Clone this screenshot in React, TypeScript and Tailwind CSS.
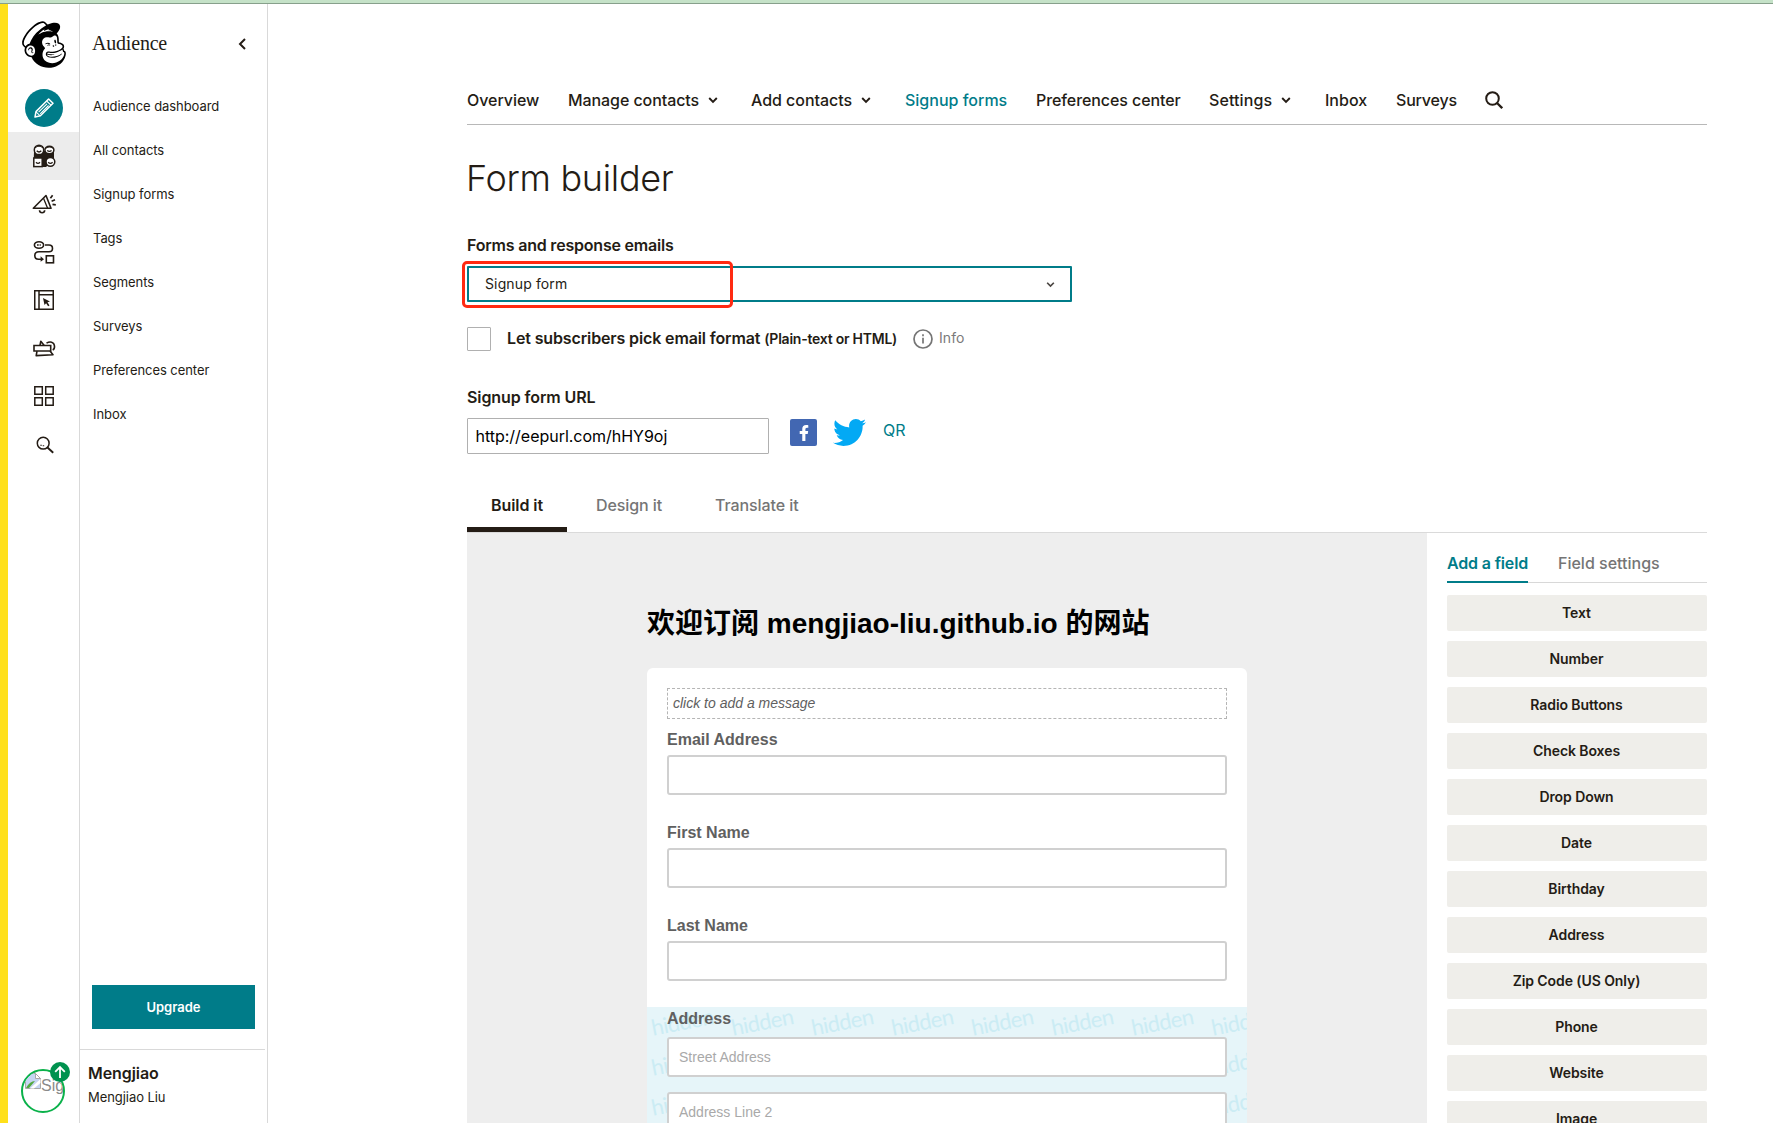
import type { ReactNode } from "react";
import { FaFacebookF, FaMailchimp, FaTwitter } from "react-icons/fa";

const sideLinks = [
  "Audience dashboard",
  "All contacts",
  "Signup forms",
  "Tags",
  "Segments",
  "Surveys",
  "Preferences center",
  "Inbox",
];

const fieldTypes = [
  "Text",
  "Number",
  "Radio Buttons",
  "Check Boxes",
  "Drop Down",
  "Date",
  "Birthday",
  "Address",
  "Zip Code (US Only)",
  "Phone",
  "Website",
  "Image",
];

function Chevron({ className = "" }: { className?: string }) {
  return (
    <svg width="10" height="8" viewBox="0 0 10 8" fill="none" stroke="currentColor" strokeWidth="1.9" className={className}>
      <path d="M1.2 2 5 5.8 8.8 2" />
    </svg>
  );
}

function PencilIcon() {
  return (
    <svg width="20" height="20" viewBox="0 0 20 20" fill="none" stroke="#fff" strokeWidth="1.5" strokeLinejoin="round">
      <path d="M1 19 2 13.6 14.6 1 19 5.2 6.4 17.8Z" />
      <path d="M12.6 3 17 7.2M4.6 14.2 13 5.9M6.2 15.8 14.6 7.5M2 13.8 6.2 17.8" strokeWidth="1.1" />
    </svg>
  );
}

function AudienceIcon() {
  return (
    <svg width="24" height="24" viewBox="0 0 24 24" fill="none" stroke="#241c15" strokeWidth="1.5">
      <path d="M2 7h20v9l-8 7H1.500z" fill="#241c15" stroke="none" />
      <circle cx="7" cy="5.900" r="4.700" fill="#fff" />
      <ellipse cx="17.400" cy="6" rx="4.500" ry="3.800" fill="#fff" />
      <rect x="1.800" y="14" width="8.400" height="8.600" fill="#fff" />
      <circle cx="18.400" cy="17.800" r="4.400" fill="#fff" />
      <path d="M4.700 6.800q2.300 2.400 4.600 0M15.200 6.400q2.200 1.800 4.400 0M4 18.300q2 2.200 4 0M16.200 18.200q2.200 2.400 4.400 0" strokeWidth="1.300" />
      <path d="M3 3.800q4-3 8 0M13.600 4.200q4-2.500 7.600 0" strokeWidth="1.100" />
    </svg>
  );
}

function CampaignIcon() {
  return (
    <svg width="24" height="22" viewBox="0 0 24 22" fill="none" stroke="#241c15" strokeWidth="1.6" strokeLinejoin="round">
      <path d="M1.300 15.300 14 2.500 19 15.300Z" />
      <path d="M11.500 5.200 15.600 15.200" strokeWidth="1.300" />
      <path d="M7.500 17.300q.2 2.500 2.600 2.500t2.600-2.500" />
      <path d="M18.400 5.200 20.600 2.300M19.600 8.200 23 6.800M20.500 11.300l3.300.5" strokeWidth="1.700" />
    </svg>
  );
}

function AutomationIcon() {
  return (
    <svg width="22" height="24" viewBox="0 0 22 24" fill="none" stroke="#241c15" strokeWidth="1.6">
      <ellipse cx="6" cy="5" rx="4.600" ry="3.300" />
      <path d="M4 5h1.700M6.600 5h1.200" strokeWidth="1.500" />
      <path d="M12 5h4c2.200 0 3.500 1.300 3.500 3.400s-1.400 3.300-3.500 3.300H6c-2.600 0-4.200 1.400-4.200 3.800 0 2.300 1.500 3.700 3.700 3.700H9" />
      <path d="M7.600 16.200 11 19.200 7.600 21.800Z" fill="#241c15" stroke="none" />
      <rect x="13.300" y="15.800" width="7.200" height="7" />
    </svg>
  );
}

function WebsiteIcon() {
  return (
    <svg width="20" height="20" viewBox="0 0 20 20" fill="none" stroke="#241c15" strokeWidth="1.500">
      <rect x=".75" y=".75" width="18.500" height="18.500" />
      <path d="M5 .7v18.600M5 4.700h14.500" />
      <path d="m9 8 7 3.500-2.500.8 2 3.100-1.400.9-2-3.100-1.600 1.700z" fill="#241c15" stroke="none" />
    </svg>
  );
}

function ContentIcon() {
  return (
    <svg width="24" height="20" viewBox="0 0 24 20" fill="none" stroke="#241c15" strokeWidth="1.600">
      <path d="M2 7.500h16.700v5.500H2z" />
      <path d="M8 7.400 8.800 3.200 12.200 7.400M5 13.200 4.200 17.600 21 16.800 18 13" strokeLinejoin="round" />
      <path d="M14.500 5.200C18 2.900 22 3.800 22.500 8c.2 2-.5 3.300-1.800 3.900" />
    </svg>
  );
}

function GridIcon() {
  return (
    <svg width="20" height="20" viewBox="0 0 20 20" fill="none" stroke="#241c15" strokeWidth="1.500">
      <path d="M.8.8h7.500v7.500H.8zM11.700.8h7.500v7.500h-7.500zM.8 11.700h7.500v7.500H.8zM11.700 11.700h7.500v7.500h-7.500z" />
    </svg>
  );
}

function RailSearchIcon() {
  return (
    <svg width="18" height="18" viewBox="0 0 18 18" fill="none" stroke="#241c15" strokeWidth="1.500" className="mt-0.5 ml-0.5">
      <circle cx="7.200" cy="7.200" r="5.900" />
      <path d="m11.500 11.500 5.700 5.300" strokeWidth="1.900" />
      <path d="M4.300 9.300h1.500M6.700 9.800h1.500" strokeWidth="1.100" />
    </svg>
  );
}

function RailItem({ children, active = false }: { children: ReactNode; active?: boolean }) {
  return (
    <div className={`flex h-12 w-full items-center justify-center ${active ? "bg-[#ececec]" : ""}`}>{children}</div>
  );
}

function Rail() {
  return (
    <nav className="flex w-[72px] shrink-0 flex-col border-r border-[#d9d9d9]">
      <FaMailchimp className="mt-[14px] ml-[10px] h-[53px] w-[52px] text-black" />
      <div className="mt-[18px] mb-[5px] ml-[17px] flex size-[38px] items-center justify-center rounded-full bg-[#007c89]">
        <PencilIcon />
      </div>
      <RailItem active>
        <AudienceIcon />
      </RailItem>
      <RailItem>
        <CampaignIcon />
      </RailItem>
      <RailItem>
        <AutomationIcon />
      </RailItem>
      <RailItem>
        <WebsiteIcon />
      </RailItem>
      <RailItem>
        <ContentIcon />
      </RailItem>
      <RailItem>
        <GridIcon />
      </RailItem>
      <RailItem>
        <RailSearchIcon />
      </RailItem>
      <div className="relative mt-auto mb-[10px] ml-[13px] size-11">
        <div className="size-11 overflow-hidden rounded-full border-2 border-[#0ab14a]">
          <div className="flex pt-0.5 pl-0.5">
            <svg width="16" height="16" viewBox="0 0 16 16" className="shrink-0">
              <path d="M.5.5h10l5 5v10H.5z" fill="#c6d5f2" stroke="#a8a8a8" />
              <path d="M10.500.5v5h5z" fill="#fff" stroke="#a8a8a8" />
              <path d="M1 15q4-7 9-7l-6 7z" fill="#53a93f" />
              <path d="M5 15.500 15.500 6v4L9 15.500z" fill="#fff" />
            </svg>
            <span className="pt-[3px] font-['Liberation_Sans'] text-base leading-5 text-[#8a8a8a]">Sig</span>
          </div>
        </div>
        <div className="absolute -top-[7px] left-[29px] flex size-5 items-center justify-center rounded-full bg-[#00924f]">
          <svg width="12" height="14" viewBox="0 0 12 14" fill="none" stroke="#fff" strokeWidth="1.800">
            <path d="M6 13V2M1.200 6.800 6 2l4.800 4.800" />
          </svg>
        </div>
      </div>
    </nav>
  );
}

function Sidebar() {
  return (
    <aside className="flex w-[188px] shrink-0 flex-col border-r border-[#d9d9d9]">
      <div className="mt-[27px] flex h-6 items-center justify-between pr-5 pl-3">
        <span className="font-['Liberation_Serif'] text-[20px] leading-6 tracking-[-0.2px]">Audience</span>
        <svg width="9" height="12" viewBox="0 0 9 12" fill="none" stroke="currentColor" strokeWidth="2" className="mt-0.5">
          <path d="M7 1 2 6l5 5" />
        </svg>
      </div>
      <div className="mt-[30px] flex flex-col pl-[13px]">
        {sideLinks.map((t) => (
          <a key={t} className="h-11 text-[13px] leading-[43px] tracking-[-0.06px]">
            {t}
          </a>
        ))}
      </div>
      <button className="mt-auto mr-3 ml-3 h-11 bg-[#007c89] text-[13px] leading-[45px] font-semibold text-white">
        Upgrade
      </button>
      <div className="mt-5 mr-[2px] h-[74px] border-t border-[#d9d9d9] pt-[11px] pl-2">
        <div className="text-base leading-6 font-semibold tracking-[-0.1px]">Mengjiao</div>
        <div className="text-[13px] leading-[25px] tracking-[-0.06px]">Mengjiao Liu</div>
      </div>
    </aside>
  );
}

function NavLink({ children, menu = false, className = "" }: { children: ReactNode; menu?: boolean; className?: string }) {
  return (
    <a className={`flex shrink-0 items-center gap-[9px] ${className}`}>
      {children}
      {menu && <Chevron />}
    </a>
  );
}

function TopNav() {
  return (
    <nav className="mt-[72px] flex h-[49px] items-stretch border-b border-[#b8b8b8] text-base font-medium whitespace-nowrap">
      <NavLink className="w-[101px] tracking-[-0.05px]">Overview</NavLink>
      <NavLink menu className="w-[183px] tracking-[-0.08px]">Manage contacts</NavLink>
      <NavLink menu className="w-[154px] tracking-[-0.04px]">Add contacts</NavLink>
      <NavLink className="w-[131px] text-[#007c89]">Signup forms</NavLink>
      <NavLink className="w-[173px] tracking-[-0.08px]">Preferences center</NavLink>
      <NavLink menu className="w-[116px] tracking-[0.1px]">Settings</NavLink>
      <NavLink className="w-[71px]">Inbox</NavLink>
      <NavLink className="w-[89px] tracking-[-0.2px]">Surveys</NavLink>
      <NavLink>
        <svg width="18" height="18" viewBox="0 0 18 18" fill="none" stroke="currentColor" strokeWidth="2">
          <circle cx="7.500" cy="7.500" r="6.300" />
          <path d="m12 12 5.200 5.200" strokeWidth="2.300" />
        </svg>
      </NavLink>
    </nav>
  );
}

function FormSettings() {
  return (
    <>
      <h1 className="mt-[31px] -ml-px text-[36px] leading-11 font-[350] tracking-[-0.3px]">Form builder</h1>
      <div className="mt-[33px] text-base leading-6 font-semibold tracking-[-0.2px]">Forms and response emails</div>
      <div className="relative mt-[9px] flex h-9 w-[605px] items-center justify-between rounded-[1px] border-2 border-[#007c89] pr-[15px] pl-4 text-sm tracking-[0.13px]">
        Signup form
        <Chevron className="h-[7px] w-[9px] text-[#4a4541]" />
        <div className="absolute -top-[7px] -left-[7px] h-[47px] w-[271px] rounded-[5px] border-3 border-[#ff2a12]" />
      </div>
      <div className="mt-[25px] flex h-6 items-center whitespace-nowrap">
        <div className="size-6 rounded-[1px] border border-[#b0b0b0]" />
        <span className="-mt-0.5 ml-4 leading-[22px] font-semibold tracking-[-0.13px]">
          Let subscribers pick email format <span className="text-sm tracking-[-0.24px]">(Plain-text or HTML)</span>
        </span>
        <svg width="20" height="20" viewBox="0 0 20 20" fill="none" stroke="#757575" strokeWidth="1.700" className="ml-4">
          <circle cx="10" cy="10" r="9" />
          <path d="M10 8.800v5.700M10 5.300v2" />
        </svg>
        <span className="-mt-0.5 ml-[6px] text-sm text-[#7a7a7a]">Info</span>
      </div>
      <div className="mt-[34px] text-base leading-6 font-semibold tracking-[-0.1px]">Signup form URL</div>
      <div className="mt-[9px] flex h-9 items-start">
        <div className="h-9 w-[302px] rounded-[1px] border border-[#b0b0b0] pl-[7.5px] text-base leading-[34px] tracking-[-0.02px] text-black">
          http://eepurl.com/hHY9oj
        </div>
        <div className="mt-px ml-[21px] flex h-[27px] w-[27px] items-center justify-center rounded-[2px] bg-[#4267b2]">
          <FaFacebookF className="size-4 text-white" />
        </div>
        <FaTwitter className="-mt-0.5 ml-4 size-[33px] text-[#03a9f4]" />
        <a className="ml-[17px] text-base leading-6 text-[#007c89]">QR</a>
      </div>
      <div className="mt-[29px] flex border-b border-[#dadada] text-base leading-[44px]">
        <div className="h-[49px] w-[100px] border-b-5 border-[#241c15] text-center font-semibold tracking-[-0.08px]">Build it</div>
        <div className="ml-[29px] w-[119px] font-medium tracking-[-0.1px] text-[#757575]">Design it</div>
        <div className="font-medium tracking-[-0.08px] text-[#757575]">Translate it</div>
      </div>
    </>
  );
}

function Field({ label }: { label: string }) {
  return (
    <div className="h-[93px] px-5">
      <div className="text-base leading-6 font-bold text-[#606060]">{label}</div>
      <div className="mt-[3px] h-10 rounded-[3px] border-2 border-[#d0d0d0] bg-white" />
    </div>
  );
}

function HiddenPattern() {
  return (
    <div className="absolute -top-0.5 right-0 bottom-0 -left-px grid grid-cols-[repeat(8,80px)] grid-rows-[repeat(3,40px)] overflow-hidden">
      {Array.from({ length: 24 }, (_, i) => (
        <span
          key={i}
          className="flex h-8 w-[72px] -rotate-[11deg] items-center justify-center font-['Lato'] text-[22px] tracking-[-0.6px] text-[#cbecf4]"
        >
          hidden
        </span>
      ))}
    </div>
  );
}

function FormPreview() {
  return (
    <section className="flex w-[960px] shrink-0 flex-col items-center overflow-hidden bg-[#eee] font-['Liberation_Sans','Noto_Sans_CJK_SC',sans-serif]">
      <h2 className="mt-[71px] h-10 w-[600px] text-[28px] leading-10 font-bold whitespace-nowrap text-black">
        欢迎订阅 mengjiao-liu.github.io 的网站
      </h2>
      <div className="mt-6 w-[600px] rounded-t-md bg-white pt-5">
        <div className="mx-5 mb-[9px] h-[31px] border border-dashed border-[#b5b5b5] pl-[5px] text-sm leading-[29px] text-[#606060] italic">
          click to add a message
        </div>
        <Field label="Email Address" />
        <Field label="First Name" />
        <Field label="Last Name" />
        <div className="relative h-[116px] overflow-hidden bg-[#e6f5f9] px-5">
          <HiddenPattern />
          <div className="relative">
            <div className="h-[30px] text-base leading-6 font-bold text-[#606060]">Address</div>
            <div className="h-10 rounded-[3px] border-2 border-[#d0d0d0] bg-white pl-[10px] text-sm leading-9 text-[#a9a9a9]">
              Street Address
            </div>
            <div className="mt-[15px] h-10 rounded-[3px] border-2 border-[#d0d0d0] bg-white pl-[10px] text-sm leading-9 text-[#a9a9a9]">
              Address Line 2
            </div>
          </div>
        </div>
      </div>
    </section>
  );
}

function FieldPanel() {
  return (
    <aside className="ml-5 flex w-[260px] flex-col">
      <div className="mt-[18px] flex h-8 border-b border-[#d8d8d8] text-base leading-6">
        <div className="h-8 border-b-2 border-[#007c89] font-semibold tracking-[-0.16px] text-[#007c89]">Add a field</div>
        <div className="ml-[30px] font-medium text-[#757575]">Field settings</div>
      </div>
      <div className="mt-3 flex flex-col gap-[10px]">
        {fieldTypes.map((t) => (
          <button
            key={t}
            className="h-9 shrink-0 rounded-[2px] bg-[#efeeea] pr-px text-sm leading-9 font-semibold tracking-[-0.08px]"
          >
            {t}
          </button>
        ))}
      </div>
    </aside>
  );
}

export default function App() {
  return (
    <div className="flex h-[1123px] w-[1773px] flex-col overflow-hidden bg-white font-['Inter',sans-serif] text-[#241c15]">
      <div className="h-1 shrink-0 border-b border-[#87a08b] bg-[#c5e2c8]" />
      <div className="flex min-h-0 flex-1">
        <div className="w-2 shrink-0 bg-[#ffe01b]" />
        <Rail />
        <Sidebar />
        <main className="ml-[199px] flex w-[1240px] flex-col">
          <TopNav />
          <FormSettings />
          <div className="flex h-[590px] shrink-0 overflow-hidden">
            <FormPreview />
            <FieldPanel />
          </div>
        </main>
      </div>
    </div>
  );
}
